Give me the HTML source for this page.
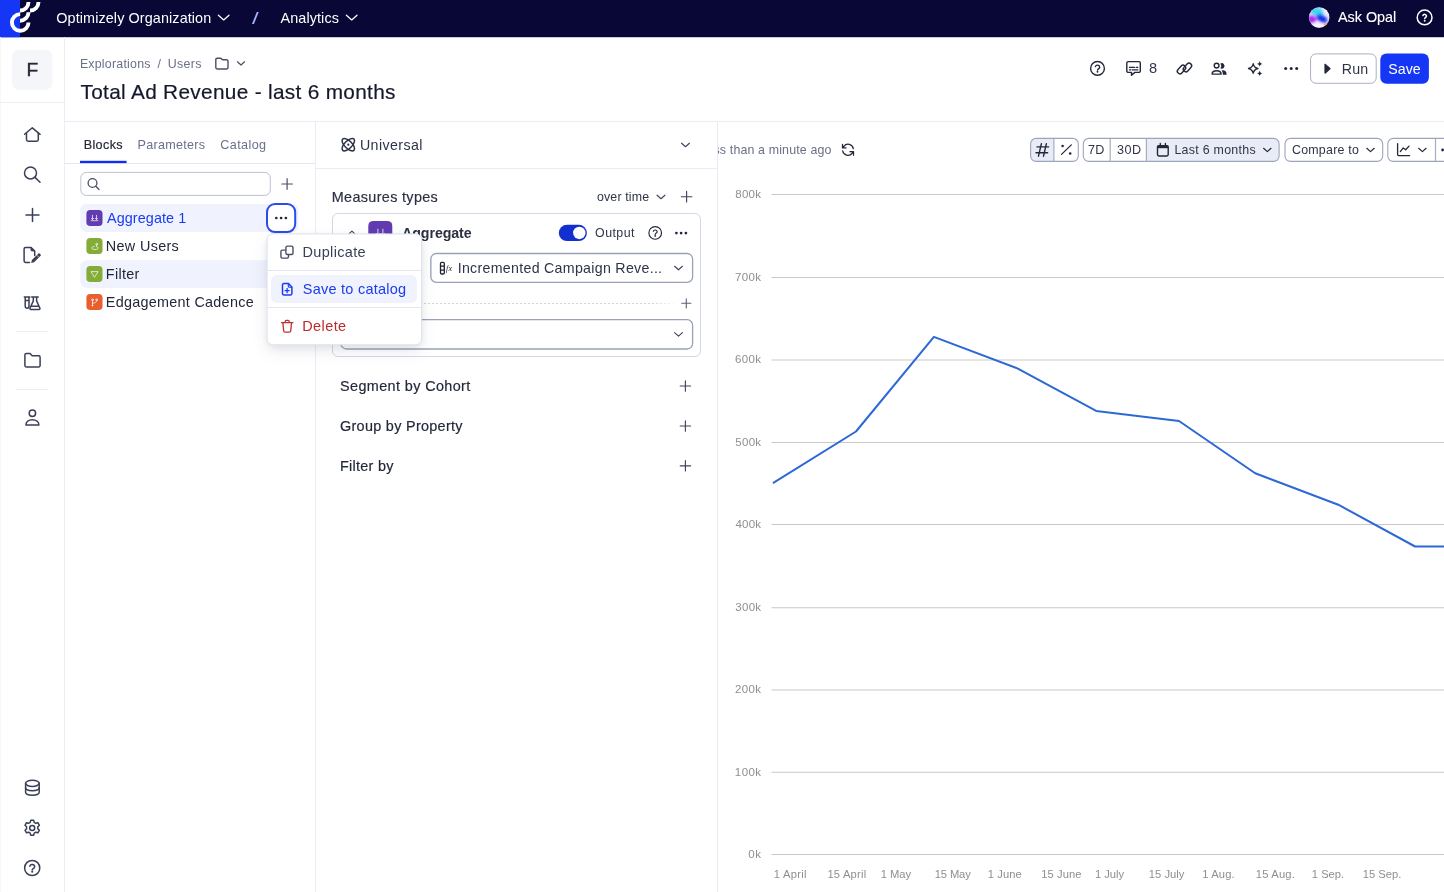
<!DOCTYPE html>
<html lang="en">
<head>
<meta charset="utf-8">
<title>Total Ad Revenue - last 6 months</title>
<style>
html,body{margin:0;padding:0;}
body{width:1444px;height:892px;overflow:hidden;background:#fff;position:relative;font-family:"Liberation Sans",sans-serif;}
.t{position:absolute;white-space:nowrap;line-height:20px;}
.tl{position:absolute;left:0;top:0;width:1444px;height:892px;will-change:transform;pointer-events:none;}
.a{position:absolute;box-sizing:border-box;}
svg{position:absolute;overflow:visible;}
.ic{fill:none;stroke:#3a3f57;stroke-width:1.5;stroke-linecap:round;stroke-linejoin:round;}

</style>
</head>
<body>
<!-- top bar -->
<div class="a" style="left:0;top:0;width:1444px;height:37px;background:#080736;"></div>
<div class="a" style="left:0;top:37px;width:1444px;height:1px;background:rgba(8,7,54,.22);"></div>
<div class="a" style="left:0;top:0;width:20px;height:37px;background:#1636f5;"></div>
<div class="a" style="left:0;top:37px;width:20px;height:1px;background:rgba(22,54,245,.22);"></div>
<!-- sidebar -->
<div class="a" style="left:0;top:37px;width:65px;height:855px;border-right:1px solid #eceef6;border-left:1px solid #f7f7fa;"></div>
<div class="a" style="left:0;top:102px;width:64px;height:1px;background:#eceef6;"></div>
<div class="a" style="left:16px;top:331px;width:32px;height:1px;background:#eceef6;"></div>
<div class="a" style="left:16px;top:389px;width:32px;height:1px;background:#eceef6;"></div>
<!-- header -->
<div class="a" style="left:65px;top:121px;width:1379px;height:1px;background:#eaecf5;"></div>
<!-- left panel -->
<div class="a" style="left:65px;top:163px;width:250px;height:1px;background:#e3e6f0;"></div>
<div class="a" style="left:315px;top:122px;width:1px;height:770px;background:#eaecf5;"></div>
<!-- middle panel -->
<div class="a" style="left:316px;top:168px;width:401px;height:1px;background:#eaecf5;"></div>
<div class="a" style="left:717px;top:122px;width:1px;height:770px;background:#eaecf5;"></div>
<div class="a" style="left:332px;top:213px;width:369px;height:144px;border:1px solid #d3d7e6;border-radius:6px;background:#fff;"></div>
<!-- chart toolbar (drawn in svg layer) -->
<!-- chart -->
<svg class="a" style="left:718px;top:170px;" width="726" height="700" viewBox="718 170 726 700">
  <g stroke="#c9c9c9" stroke-width="1">
    <line x1="771.5" y1="194.5" x2="1444" y2="194.5"/>
    <line x1="771.5" y1="277.5" x2="1444" y2="277.5"/>
    <line x1="771.5" y1="360" x2="1444" y2="360"/>
    <line x1="771.5" y1="442.5" x2="1444" y2="442.5"/>
    <line x1="771.5" y1="524.5" x2="1444" y2="524.5"/>
    <line x1="771.5" y1="607.75" x2="1444" y2="607.75"/>
    <line x1="771.5" y1="690" x2="1444" y2="690"/>
    <line x1="771.5" y1="772.25" x2="1444" y2="772.25"/>
    <line x1="771.5" y1="854.5" x2="1444" y2="854.5"/>
  </g>
  <polyline fill="none" stroke="#2c68d6" stroke-width="2" stroke-linejoin="round" points="772.9,483.2 856,431.5 933.9,336.9 1017.8,368.6 1096.2,410.9 1179,421 1255.2,473.3 1338.3,504.7 1415.1,546.5 1446,546.5"/>
</svg>
<div class="a" style="left:698px;top:138px;width:19px;height:24px;background:#fff;z-index:6;"></div>
<div class="a" style="left:717px;top:138px;width:1px;height:24px;background:#eaecf5;z-index:6;"></div>
<!-- icon layer (page coordinates) -->
<svg class="a" style="left:0;top:0;" width="1444" height="892" viewBox="0 0 1444 892">
  <!-- boxes with sub-pixel geometry -->
  <rect x="12.100" y="49.800" width="40.200" height="39.900" rx="6.500" fill="#f5f6fa"/>
  <rect x="1310.550" y="53.900" width="65.650" height="29.400" rx="5.500" fill="#fff" stroke="#aab0c4" stroke-width="1"/>
  <rect x="1380.300" y="53.400" width="48.600" height="30.400" rx="6.200" fill="#1636f5"/>
  <rect x="80.800" y="172.400" width="189.500" height="23" rx="5.500" fill="#fff" stroke="#bcc1d3" stroke-width="1"/>
  <rect x="80.300" y="204" width="218.100" height="27.900" rx="6" fill="#f0f2fe"/>
  <rect x="80.300" y="260.200" width="218.100" height="27.800" rx="6" fill="#f0f2fe"/>
  <rect x="267" y="204" width="28.200" height="28.100" rx="8" fill="#fff" stroke="#2b4beb" stroke-width="2"/>
  <rect x="368.300" y="220.900" width="24" height="24" rx="5" fill="#623bb0"/>
  <rect x="558.800" y="224.800" width="28.100" height="16.300" rx="8.150" fill="#1230d0"/>
  <circle cx="579.300" cy="232.950" r="6.200" fill="#fff"/>
  <!-- logo -->
  <g fill="none" stroke="#fff" stroke-width="3.9">
    <path d="M20 10.5A8.5 8.5 0 0 0 28.5 2"/>
    <path d="M30 10.5A8.5 8.5 0 0 0 38.5 2"/>
    <path d="M20 20.7A8.5 8.5 0 0 0 28.5 12.2"/>
    <path d="M20.200 14.100A8.300 8.300 0 1 0 28.500 22.400"/>
  </g>

  <!-- opal orb -->
  <defs>
    <clipPath id="orbc"><circle cx="1319.200" cy="17.450" r="10.250"/></clipPath>
    <filter id="orbb" x="-50%" y="-50%" width="200%" height="200%"><feGaussianBlur stdDeviation="1.700"/></filter>
    <filter id="orbs" x="-50%" y="-50%" width="200%" height="200%"><feGaussianBlur stdDeviation=".600"/></filter>
  </defs>
  <g clip-path="url(#orbc)">
    <rect x="1305" y="3" width="30" height="30" fill="#efe4ff"/>
    <g filter="url(#orbb)">
      <ellipse cx="1317.500" cy="11.800" rx="7.500" ry="4.200" fill="#3fd6f0" transform="rotate(12 1317.500 11.800)"/>
      <ellipse cx="1326.500" cy="11" rx="3.500" ry="3" fill="#f4f0ff"/>
      <ellipse cx="1311.800" cy="19.300" rx="4.600" ry="4" fill="#b22cf2"/>
      <ellipse cx="1321.800" cy="18.600" rx="6" ry="3.600" fill="#1233f2" transform="rotate(28 1321.800 18.600)"/>
      <ellipse cx="1316.500" cy="26" rx="6" ry="3" fill="#fbf6ff"/>
    </g>
    <circle cx="1325.700" cy="24.700" r="1.500" fill="#f5a12e" filter="url(#orbs)"/>
  </g>
  <!-- top bar chevrons / help -->
  <g fill="none" stroke="#fff" stroke-width="1.3" stroke-linecap="round" stroke-linejoin="round">
    <path d="M218.4 15.3l5.3 4.6 5.3-4.6"/>
    <path d="M346.4 15.3l5.3 4.6 5.3-4.6"/>
    <circle cx="1424.6" cy="17.4" r="7.4" stroke-width="1.5"/>
    <path d="M1422.900 15.600a1.850 1.800 0 0 1 3.600.500c0 1.250-1.800 1.500-1.800 2.350" stroke-width="1.500"/>
  </g>
  <circle cx="1424.700" cy="20.700" r=".950" fill="#fff"/>

  <!-- sidebar icons -->
  <g class="ic" stroke-width="1.45">
    <!-- home -->
    <path d="M24.6 134.3l7.7-6.5 7.8 6.5"/>
    <path d="M26.5 133v6.6a1.6 1.6 0 0 0 1.6 1.6h8.6a1.6 1.6 0 0 0 1.6-1.6V133"/>
    <!-- search -->
    <circle cx="30.5" cy="172.9" r="6"/>
    <path d="M35 177.4l5 4.9"/>
    <!-- plus -->
    <path d="M26 215h13M32.5 208.5v13"/>
    <!-- file edit -->
    <path d="M29.5 262.4h-4a1.4 1.4 0 0 1-1.4-1.4v-12.1a1.4 1.4 0 0 1 1.4-1.4h5.6l3.6 3.6v4.3"/>
    <path d="M31 247.900v2.200a.8.800 0 0 0 .8.800h2.300z" stroke-width="1" fill="#3a3f57"/>
    <!-- flasks -->
    <path d="M24.300 296.900h5.600M25.200 297v9.300a1.900 1.900 0 0 0 3.800 0V297M25.400 300.600h3.400"/>
    <path d="M31.7 296.900h6.500M33.300 297v3.900l-3.300 7.300a.9.900 0 0 0 .8 1.300h8.300a.9.900 0 0 0 .8-1.300L36.600 300.900V297M31.300 306.200h7.300"/>
    <!-- folder -->
    <path d="M24.900 354.900a1.400 1.400 0 0 1 1.400-1.400h3.700l2.200 2.300h6.500a1.400 1.400 0 0 1 1.400 1.400v8.300a1.400 1.400 0 0 1-1.400 1.400H26.300a1.400 1.400 0 0 1-1.400-1.400z"/>
    <!-- user -->
    <circle cx="32.4" cy="413.200" r="3.200"/>
    <path d="M25.900 425.100c0-3.300 2.900-5.300 6.500-5.300s6.500 2 6.500 5.300z"/>
    <!-- database -->
    <ellipse cx="32.400" cy="783.300" rx="6.800" ry="3.100"/>
    <path d="M25.600 783.300v9c0 1.700 3 2.900 6.800 2.900s6.800-1.200 6.800-2.900v-9"/>
    <path d="M25.600 787.800c0 1.700 3 2.900 6.800 2.900s6.800-1.200 6.800-2.900"/>
    <!-- gear -->
    <circle cx="32.200" cy="828" r="2.500"/>
    <path d="M30.700 820.300h3l.5 2.100 1.600.9 2.100-.6 1.500 2.600-1.600 1.500v1.900l1.600 1.500-1.500 2.600-2.100-.6-1.600.9-.5 2.100h-3l-.5-2.100-1.600-.9-2.100.6-1.500-2.600 1.600-1.500v-1.900l-1.600-1.500 1.500-2.600 2.100.6 1.600-.9z"/>
    <!-- help -->
    <circle cx="32.200" cy="868" r="7.600"/>
    <path d="M29.800 866.200a2.500 2.300 0 0 1 4.900.6c0 1.700-2.500 2-2.500 3.200"/>
  </g>
  <circle cx="32.200" cy="871.800" r="1.050" fill="#3a3f57"/>
  <!-- pencil for file edit (filled) -->
  <path d="M31.200 262.900l.7-2.800 6.300-6.300a1.200 1.200 0 0 1 1.700 0l.5.500a1.200 1.200 0 0 1 0 1.700l-6.300 6.300z" fill="#3a3f57"/>
  <path d="M36.900 255.200l2.300 2.300" stroke="#fff" stroke-width=".7"/>

  <!-- breadcrumb folder + chevron -->
  <g fill="none" stroke="#4a5064" stroke-width="1.4" stroke-linecap="round" stroke-linejoin="round">
    <path d="M215.800 59.600a1.400 1.400 0 0 1 1.400-1.400h3.100a1.400 1.400 0 0 1 1.100.5l.5.600a1.400 1.400 0 0 0 1.100.5h3.600a1.400 1.400 0 0 1 1.400 1.400v6.400a1.400 1.400 0 0 1-1.400 1.400h-9.400a1.400 1.400 0 0 1-1.400-1.400z"/>
    <path d="M237.400 61.800l3.600 3.200 3.600-3.200" stroke-width="1.200"/>
  </g>
  <!-- header toolbar icons -->
  <g fill="none" stroke="#23273a" stroke-width="1.4" stroke-linecap="round" stroke-linejoin="round">
    <!-- help -->
    <circle cx="1097.500" cy="68.400" r="6.900"/>
    <path d="M1095.400 66.600a2.200 2.100 0 0 1 4.300.6c0 1.500-2.200 1.800-2.200 2.900"/>
    <!-- comments -->
    <path d="M1128.300 61.600h10.500a1.500 1.500 0 0 1 1.500 1.500v7.800a1.500 1.500 0 0 1-1.500 1.500h-3.900l-3.400 2.900v-2.900h-3.200a1.500 1.500 0 0 1-1.500-1.500v-7.800a1.500 1.500 0 0 1 1.500-1.500z"/>
    <path d="M1129.400 67.300h5.200M1136.200 67.300h1.700M1129.400 69.800h1.300M1132.100 69.800h5.800" stroke-width="1.200"/>
    <!-- link -->
    <rect x="1176.600" y="66.900" width="9.800" height="5.200" rx="2.600" transform="rotate(-47 1181.500 69.500)"/>
    <rect x="1182.550" y="64.850" width="9.800" height="5.200" rx="2.600" transform="rotate(-47 1187.450 67.450)"/>
    <!-- users -->
    <circle cx="1216.600" cy="65.600" r="2.400"/>
    <path d="M1212.100 74.100c0-2.300 2-3.400 4.500-3.400s4.500 1.100 4.500 3.400z"/>
    <!-- sparkles big star -->
    <path d="M1253.200 63.800c.5 2.700 1.600 3.900 4.700 4.700-3.100.8-4.200 2-4.700 4.700-.5-2.700-1.600-3.900-4.700-4.700 3.100-.8 4.200-2 4.700-4.700z"/>
  </g>
  <circle cx="1097.500" cy="71.700" r=".95" fill="#23273a"/>
  <g fill="#23273a">
    <!-- users (second, filled) -->
    <path d="M1220.400 63.600a2.700 2.700 0 1 1 0 4.600a3.700 3.700 0 0 0 0-4.600z"/>
    <path d="M1221.700 70.500c2.800-.6 4.900.9 4.900 3.600v.7h-3.800v-.7c0-1.500-.4-2.700-1.100-3.600z"/>
    <!-- sparkles small -->
    <path d="M1259.700 61.100c.3 1.700.9 2.400 2.800 2.800-1.900.4-2.500 1.100-2.800 2.800-.3-1.700-.9-2.400-2.800-2.800 1.900-.4 2.500-1.100 2.800-2.800z"/>
    <path d="M1259.700 70.600c.3 1.700.9 2.400 2.800 2.800-1.900.4-2.500 1.100-2.800 2.800-.3-1.700-.9-2.400-2.800-2.800 1.900-.4 2.500-1.100 2.800-2.800z"/>
    <!-- more dots -->
    <circle cx="1285.700" cy="68.500" r="1.500"/><circle cx="1291.200" cy="68.500" r="1.500"/><circle cx="1296.700" cy="68.500" r="1.500"/>
    <!-- play -->
    <path d="M1324.400 64.600a.8.800 0 0 1 1.300-.7l4.600 4.200a.8.800 0 0 1 0 1.200l-4.600 4.200a.8.800 0 0 1-1.300-.7z"/>
  </g>

  <!-- select boxes + dashed separator -->
  <defs><linearGradient id="fade" gradientUnits="userSpaceOnUse" x1="655" y1="0" x2="677" y2="0"><stop offset="0" stop-color="#d3d6e4"/><stop offset="1" stop-color="#d3d6e4" stop-opacity="0"/></linearGradient></defs>
  <g fill="#fff" stroke="#9aa1b8" stroke-width="1.300">
    <rect x="430.850" y="253.500" width="261.750" height="28.900" rx="5.500"/>
    <rect x="340.900" y="319.650" width="351.700" height="29.350" rx="5.500"/>
  </g>
  <path d="M348 303.500H677" fill="none" stroke="url(#fade)" stroke-width="1" stroke-dasharray="2.100 1.900"/>
  <!-- left panel: search, plus, dots -->
  <g fill="none" stroke="#4a5064" stroke-width="1.300" stroke-linecap="round" stroke-linejoin="round">
    <circle cx="92.500" cy="183" r="4.400"/>
    <path d="M95.800 186.300l3.200 3.200"/>
    <path d="M281.800 184h10.600M287.100 178.700v10.600" stroke-width="1.200"/>
  </g>
  <g fill="#23273a">
    <circle cx="276.300" cy="218" r="1.350"/><circle cx="281.100" cy="218" r="1.350"/><circle cx="285.900" cy="218" r="1.350"/>
  </g>
  <rect x="80" y="160.800" width="46.600" height="2.300" fill="#0f2ff0"/>
  <!-- block type squares -->
  <rect x="86.400" y="210" width="16.100" height="16" rx="3.800" fill="#623bb0"/>
  <rect x="86.400" y="238" width="16.100" height="16" rx="3.800" fill="#84ac38"/>
  <rect x="86.400" y="266" width="16.100" height="16" rx="3.800" fill="#84ac38"/>
  <rect x="86.400" y="294" width="16.100" height="16" rx="3.800" fill="#e85f2f"/>
  <!-- block type glyphs -->
  <g fill="none" stroke="#fff" stroke-opacity=".88" stroke-width=".8" stroke-linecap="round" stroke-linejoin="round">
    <path d="M92.500 215.300v4M96.500 215.300v4M91.300 218.300l1.200 1.200 1.200-1.200M95.300 218.300l1.200 1.200 1.200-1.200M91.100 220.700h6.800"/>
    <circle cx="96.600" cy="244.200" r=".9"/>
    <path d="M96.600 245.100v1.300M94.200 246.600c-1.700 0-2.500.7-2.500 1.400 0 .9 1.500 1.500 3.300 1.500s3.300-.6 3.300-1.500c0-.5-.5-.9-1.300-1.100"/>
    <path d="M91.400 271.600h6.600l-3.300 5.400z"/>
    <circle cx="92.500" cy="299.800" r=".9"/><circle cx="96.600" cy="299.800" r=".9"/>
    <path d="M92.500 300.700v4.600M96.600 300.700c0 1.700-1.200 2.300-4.100 2.500"/>
  </g>
  <circle cx="92.500" cy="305.600" r=".8" fill="#fff"/>

  <!-- middle panel icons -->
  <g fill="none" stroke="#2b3045" stroke-width="1.500" stroke-linecap="round" stroke-linejoin="round">
    <ellipse cx="348.300" cy="144.700" rx="8" ry="3.700" transform="rotate(45 348.300 144.700)"/>
    <ellipse cx="348.300" cy="144.700" rx="8" ry="3.700" transform="rotate(-45 348.300 144.700)"/>
  </g>
  <circle cx="348.300" cy="144.700" r="1.100" fill="#2b3045"/>
  <g fill="none" stroke="#40455b" stroke-width="1.150" stroke-linecap="round" stroke-linejoin="round">
    <path d="M681.600 143.200l3.900 3.500 3.900-3.500"/>
    <path d="M657.100 195.200l3.900 3.500 3.900-3.500"/>
    <path d="M681.300 196.700h10.600M686.600 191.400v10.600"/>
    <path d="M349.200 233.700l2.700-2.600 2.700 2.600"/>
    <circle cx="655.200" cy="232.900" r="6.300" stroke="#23273a"/>
    <path d="M653.300 231.300a2 1.900 0 0 1 3.900.5c0 1.400-2 1.600-2 2.600" stroke="#23273a"/>
    <path d="M674.600 266.300l3.900 3.500 3.900-3.500"/>
    <path d="M674.600 332.600l3.900 3.500 3.900-3.500"/>
    <path d="M681.700 303.300h9.200M686.300 298.700v9.200" stroke-width="1.100" stroke="#5a6078"/>
    <path d="M680.200 386h10.400M685.400 380.800v10.400"/>
    <path d="M680.200 426h10.400M685.400 420.800v10.400"/>
    <path d="M680.200 465.800h10.400M685.400 460.600v10.400"/>
  </g>
  <circle cx="655.200" cy="235.900" r=".85" fill="#23273a"/>
  <g fill="#23273a">
    <circle cx="676.400" cy="233.100" r="1.350"/><circle cx="681.100" cy="233.100" r="1.350"/><circle cx="685.900" cy="233.100" r="1.350"/>
  </g>
  <!-- aggregate glyph in big purple icon -->
  <g fill="none" stroke="#fff" stroke-opacity=".8" stroke-width="1" stroke-linecap="round" stroke-linejoin="round">
    <path d="M377.900 229.200v5.600M382.900 229.200v5.600M376.200 233.400l1.700 1.700 1.700-1.700M381.200 233.400l1.700 1.700 1.700-1.700M375.600 237.300h9.600"/>
  </g>
  <!-- fx column icon -->
  <g fill="none" stroke="#1e2235" stroke-width="1.300" stroke-linejoin="round">
    <rect x="440.500" y="262.300" width="3.800" height="11.700" rx="1.200"/>
    <path d="M440.500 266.100h3.800M440.500 270.200h3.800"/>
  </g>

  <!-- chart toolbar button groups -->
  <g fill="#e9ecf7">
    <path d="M1036.100 138.400H1053.900V161.400H1036.100A5.500 5.500 0 0 1 1030.600 155.900V143.900A5.500 5.500 0 0 1 1036.100 138.400Z"/>
    <path d="M1146.400 138.400H1273.600A5.500 5.500 0 0 1 1279.100 143.900V155.900A5.500 5.500 0 0 1 1273.600 161.400H1146.400Z"/>
  </g>
  <g fill="none" stroke="#9da5bc" stroke-width="1.100">
    <rect x="1030.600" y="138.400" width="47.700" height="23" rx="5.500"/>
    <rect x="1083.300" y="138.400" width="195.800" height="23" rx="5.500"/>
    <rect x="1285" y="138.400" width="97.700" height="23" rx="5.500"/>
    <rect x="1387.800" y="138.400" width="80" height="23" rx="5.500"/>
    <path d="M1053.900 138.400V161.400M1110.200 138.400V161.400M1146.400 138.400V161.400M1435.500 138.400V161.400" stroke="#a6adc3" stroke-width="1.200"/>
  </g>
  <!-- chart toolbar icons -->
  <g fill="none" stroke="#23273a" stroke-width="1.300" stroke-linecap="round" stroke-linejoin="round">
    <!-- refresh -->
    <g transform="translate(1696 0) scale(-1 1)"><path d="M842.700 148.600a5.300 5.300 0 0 1 9.400-2.300l1.300 1.500M853.500 144.400v3.500h-3.500"/>
    <path d="M853.300 151a5.300 5.300 0 0 1-9.400 2.300l-1.300-1.500M842.500 155.200v-3.500h3.500"/></g>
    <!-- hash -->
    <path d="M1037 146.900h11.600M1036 152.700h11.600M1041.400 143.600l-2.900 12.600M1046.400 143.600l-2.900 12.600" stroke-width="1.400"/>
    <!-- percent -->
    <path d="M1071.300 144.900l-9.800 9.500"/>
    <!-- calendar -->
    <rect x="1157.500" y="145.600" width="10.700" height="10.400" rx="1.400" stroke-width="1.400"/>
    <path d="M1160.300 143.500v2M1165.400 143.500v2" stroke-width="1.400"/>
    <!-- chevrons -->
    <path d="M1263.600 148.300l3.700 3.300 3.700-3.300" stroke-width="1.200"/>
    <path d="M1366.800 148.300l3.700 3.300 3.700-3.300" stroke-width="1.200"/>
    <path d="M1418.700 148.300l3.700 3.300 3.700-3.300" stroke-width="1.200"/>
    <!-- line chart -->
    <path d="M1397.600 143.700v10.900a1 1 0 0 0 1 1h11"/>
    <path d="M1400.300 151.600l2.900-3.700 2.500 1.900 3.300-3.700"/>
  </g>
  <g fill="#23273a">
    <circle cx="1062.600" cy="146" r="1.300"/><circle cx="1070.200" cy="153.500" r="1.300"/>
    <rect x="1157.500" y="145.600" width="10.700" height="2.600"/>
    <circle cx="1442.600" cy="150" r="1.400"/>
  </g>
</svg>
<!-- popup menu -->
<svg class="a" style="left:0;top:0;z-index:20;filter:drop-shadow(0 6px 7px rgba(30,35,70,.10)) drop-shadow(0 2px 3px rgba(30,35,70,.05));" width="1444" height="892" viewBox="0 0 1444 892"><rect x="267.100" y="233.900" width="154.500" height="110.900" rx="5.800" fill="#fff" stroke="#dde0ec" stroke-width="1"/></svg>
<div class="a" style="left:271px;top:275px;width:146px;height:28px;border-radius:6px;background:#f0f2fe;z-index:21;"></div>
<div class="a" style="left:268px;top:270px;width:153px;height:1px;background:#e4e6f0;z-index:21;"></div>
<div class="a" style="left:268px;top:307px;width:153px;height:1px;background:#e4e6f0;z-index:21;"></div>
<svg class="a" style="left:0;top:0;z-index:22;" width="1444" height="892" viewBox="0 0 1444 892">
  <g fill="none" stroke-width="1.4" stroke-linecap="round" stroke-linejoin="round">
    <!-- duplicate -->
    <rect x="285.900" y="246.100" width="7.100" height="8.400" rx="1.500" stroke="#4a5066"/>
    <path d="M285.500 250.100h-3.100a1.500 1.500 0 0 0-1.500 1.500v5a1.500 1.500 0 0 0 1.500 1.500h4.600a1.500 1.500 0 0 0 1.500-1.500v-1.700" stroke="#4a5066"/>
    <!-- file plus -->
    <path d="M282.500 284.900a1.300 1.300 0 0 1 1.300-1.300h4.700l3.400 3.400v6.600a1.300 1.300 0 0 1-1.300 1.300h-6.800a1.300 1.300 0 0 1-1.300-1.300z" stroke="#1a3cf0" stroke-width="1.500"/>
    <path d="M288.300 283.800v2.400a1 1 0 0 0 1 1h2.400" stroke="#1a3cf0" stroke-width="1.100"/>
    <path d="M285 290.600h4.200M287.100 288.500v4.200" stroke="#1a3cf0" stroke-width="1.300"/>
    <!-- trash -->
    <path d="M281.500 322.700h11.400M285.200 322.500v-.9a1.200 1.200 0 0 1 1.200-1.200h1.600a1.200 1.200 0 0 1 1.200 1.200v.9M282.900 322.900l.8 8.100a1.300 1.300 0 0 0 1.300 1.200h4.400a1.300 1.300 0 0 0 1.300-1.200l.8-8.100" stroke="#c0302c" stroke-width="1.300"/>
  </g>
</svg>

<!-- text layer -->
<div class="tl" style="z-index:5;">
<span class="t" id="t0" style="left:56.32px;top:7.67px;font-size:14.4px;color:#ffffff;letter-spacing:0.098px;">Optimizely Organization</span>
<span class="t" id="t1" style="left:252.20px;top:8.78px;font-size:16px;color:#a5b4fd;transform:scaleX(1.5);transform-origin:0 50%;">/</span>
<span class="t" id="t2" style="left:280.57px;top:7.67px;font-size:14.4px;color:#ffffff;letter-spacing:0.094px;">Analytics</span>
<span class="t" id="t3" style="left:1338.03px;top:7.47px;font-size:14.4px;color:#ffffff;letter-spacing:-0.017px;-webkit-text-stroke:0.12px #ffffff;">Ask Opal</span>
<span class="t" id="t4" style="left:26.52px;top:59.92px;font-size:19.2px;color:#23273a;-webkit-text-stroke:0.4px #23273a;">F</span>
<span class="t" id="t5" style="left:79.88px;top:53.54px;font-size:12.4px;color:#6a7088;letter-spacing:0.216px;">Explorations</span>
<span class="t" id="t6" style="left:157.50px;top:53.54px;font-size:12.4px;color:#6a7088;">/</span>
<span class="t" id="t7" style="left:167.64px;top:53.54px;font-size:12.4px;color:#6a7088;letter-spacing:0.336px;">Users</span>
<span class="t" id="t8" style="left:80.53px;top:82.14px;font-size:20.8px;color:#14182b;letter-spacing:0.313px;-webkit-text-stroke:0.2px #14182b;">Total Ad Revenue - last 6 months</span>
<span class="t" id="t9" style="left:1148.97px;top:58.27px;font-size:14.6px;color:#2f3449;">8</span>
<span class="t" id="t10" style="left:1341.84px;top:58.76px;font-size:14.2px;color:#2f3449;letter-spacing:0.178px;">Run</span>
<span class="t" id="t11" style="left:1388.26px;top:58.76px;font-size:14.2px;color:#ffffff;letter-spacing:0.011px;">Save</span>
<span class="t" id="t12" style="left:83.66px;top:134.54px;font-size:12.6px;color:#23273a;letter-spacing:0.383px;-webkit-text-stroke:0.18px #23273a;">Blocks</span>
<span class="t" id="t13" style="left:137.57px;top:134.54px;font-size:12.6px;color:#6a7088;letter-spacing:0.266px;">Parameters</span>
<span class="t" id="t14" style="left:220.36px;top:134.54px;font-size:12.6px;color:#6a7088;letter-spacing:0.388px;">Catalog</span>
<span class="t" id="t15" style="left:106.97px;top:208.17px;font-size:14.4px;color:#1a3cf0;letter-spacing:0.091px;">Aggregate 1</span>
<span class="t" id="t16" style="left:105.82px;top:236.17px;font-size:14.4px;color:#23273a;letter-spacing:0.328px;">New Users</span>
<span class="t" id="t17" style="left:105.82px;top:264.17px;font-size:14.4px;color:#23273a;letter-spacing:0.307px;">Filter</span>
<span class="t" id="t18" style="left:105.82px;top:292.17px;font-size:14.4px;color:#23273a;letter-spacing:0.271px;">Edgagement Cadence</span>
<span class="t" id="t19" style="left:359.90px;top:135.16px;font-size:14.2px;color:#2f3449;letter-spacing:0.426px;">Universal</span>
<span class="t" id="t20" style="left:331.71px;top:187.17px;font-size:14.4px;color:#2b3042;letter-spacing:0.349px;-webkit-text-stroke:0.18px #2b3042;">Measures types</span>
<span class="t" id="t21" style="left:596.98px;top:187.14px;font-size:12.4px;color:#2f3449;letter-spacing:0.150px;">over time</span>
<span class="t" id="t22" style="left:402.05px;top:223.16px;font-size:14.2px;color:#2b3042;font-weight:700;letter-spacing:-0.067px;">Aggregate</span>
<span class="t" id="t23" style="left:595.11px;top:222.94px;font-size:12.4px;color:#2f3449;letter-spacing:0.415px;">Output</span>
<span class="t" id="t24" style="left:457.69px;top:258.16px;font-size:14.2px;color:#2f3449;letter-spacing:0.297px;">Incremented Campaign Reve...</span>
<span class="t" id="t25" style="left:340.04px;top:376.17px;font-size:14.4px;color:#23273a;letter-spacing:0.392px;-webkit-text-stroke:0.18px #23273a;">Segment by Cohort</span>
<span class="t" id="t26" style="left:339.97px;top:416.17px;font-size:14.4px;color:#23273a;letter-spacing:0.312px;-webkit-text-stroke:0.18px #23273a;">Group by Property</span>
<span class="t" id="t27" style="left:339.91px;top:455.97px;font-size:14.4px;color:#23273a;letter-spacing:0.305px;-webkit-text-stroke:0.18px #23273a;">Filter by</span>
<span class="t" id="t28" style="left:729.81px;top:139.74px;font-size:12.4px;color:#6a7088;letter-spacing:0.150px;">than a minute ago</span>
<span class="t" id="t29" style="left:699.18px;top:139.74px;font-size:12.4px;color:#6a7088;letter-spacing:0.226px;">Less</span>
<span class="t" id="t30" style="left:1087.95px;top:139.74px;font-size:12.6px;color:#2f3449;letter-spacing:0.340px;">7D</span>
<span class="t" id="t31" style="left:1117.02px;top:139.74px;font-size:12.6px;color:#2f3449;letter-spacing:0.437px;">30D</span>
<span class="t" id="t32" style="left:1174.38px;top:139.74px;font-size:12.4px;color:#2f3449;letter-spacing:0.285px;">Last 6 months</span>
<span class="t" id="t33" style="left:1291.97px;top:139.74px;font-size:12.4px;color:#2f3449;letter-spacing:0.244px;">Compare to</span>
<span class="t" id="t37" style="left:735.20px;top:184.33px;font-size:11.5px;color:#8f8f8f;letter-spacing:0.315px;">800k</span>
<span class="t" id="t38" style="left:735.11px;top:266.83px;font-size:11.5px;color:#8f8f8f;letter-spacing:0.345px;">700k</span>
<span class="t" id="t39" style="left:735.12px;top:349.33px;font-size:11.5px;color:#8f8f8f;letter-spacing:0.343px;">600k</span>
<span class="t" id="t40" style="left:735.24px;top:431.83px;font-size:11.5px;color:#8f8f8f;letter-spacing:0.302px;">500k</span>
<span class="t" id="t41" style="left:735.44px;top:514.33px;font-size:11.5px;color:#8f8f8f;letter-spacing:0.237px;">400k</span>
<span class="t" id="t42" style="left:735.26px;top:596.83px;font-size:11.5px;color:#8f8f8f;letter-spacing:0.295px;">300k</span>
<span class="t" id="t43" style="left:735.12px;top:679.33px;font-size:11.5px;color:#8f8f8f;letter-spacing:0.341px;">200k</span>
<span class="t" id="t44" style="left:734.82px;top:761.83px;font-size:11.5px;color:#8f8f8f;letter-spacing:0.441px;">100k</span>
<span class="t" id="t45" style="left:748.35px;top:844.33px;font-size:11.5px;color:#8f8f8f;letter-spacing:0.576px;">0k</span>
<span class="t" id="t46" style="left:773.85px;top:864.43px;font-size:11.2px;color:#8f8f8f;letter-spacing:0.251px;">1 April</span>
<span class="t" id="t47" style="left:827.45px;top:864.43px;font-size:11.2px;color:#8f8f8f;letter-spacing:0.196px;">15 April</span>
<span class="t" id="t48" style="left:880.85px;top:864.43px;font-size:11.2px;color:#8f8f8f;letter-spacing:-0.073px;">1 May</span>
<span class="t" id="t49" style="left:934.75px;top:864.43px;font-size:11.2px;color:#8f8f8f;letter-spacing:-0.142px;">15 May</span>
<span class="t" id="t50" style="left:987.85px;top:864.43px;font-size:11.2px;color:#8f8f8f;letter-spacing:0.071px;">1 June</span>
<span class="t" id="t51" style="left:1041.25px;top:864.43px;font-size:11.2px;color:#8f8f8f;letter-spacing:0.073px;">15 June</span>
<span class="t" id="t52" style="left:1094.95px;top:864.43px;font-size:11.2px;color:#8f8f8f;letter-spacing:-0.012px;">1 July</span>
<span class="t" id="t53" style="left:1148.85px;top:864.43px;font-size:11.2px;color:#8f8f8f;">15 July</span>
<span class="t" id="t54" style="left:1202.25px;top:864.43px;font-size:11.2px;color:#8f8f8f;letter-spacing:0.148px;">1 Aug.</span>
<span class="t" id="t55" style="left:1255.85px;top:864.43px;font-size:11.2px;color:#8f8f8f;letter-spacing:0.170px;">15 Aug.</span>
<span class="t" id="t56" style="left:1311.75px;top:864.43px;font-size:11.2px;color:#8f8f8f;letter-spacing:0.023px;">1 Sep.</span>
<span class="t" id="t57" style="left:1362.65px;top:864.43px;font-size:11.2px;color:#8f8f8f;letter-spacing:0.033px;">15 Sep.</span>
<span class="t" id="t58" style="left:446.11px;top:258.69px;font-size:8.2px;color:#1e2235;font-style:italic;font-family:'Liberation Serif',serif;">fx</span>
</div>
<div class="tl" style="z-index:30;">
<span class="t" id="t34" style="left:302.51px;top:242.17px;font-size:14.5px;color:#3a3f55;letter-spacing:0.335px;">Duplicate</span>
<span class="t" id="t35" style="left:302.74px;top:279.27px;font-size:14.5px;color:#1a3cf0;letter-spacing:0.245px;">Save to catalog</span>
<span class="t" id="t36" style="left:302.21px;top:316.27px;font-size:14.5px;color:#bf2a2a;letter-spacing:0.402px;">Delete</span>
</div>
</body>
</html>
